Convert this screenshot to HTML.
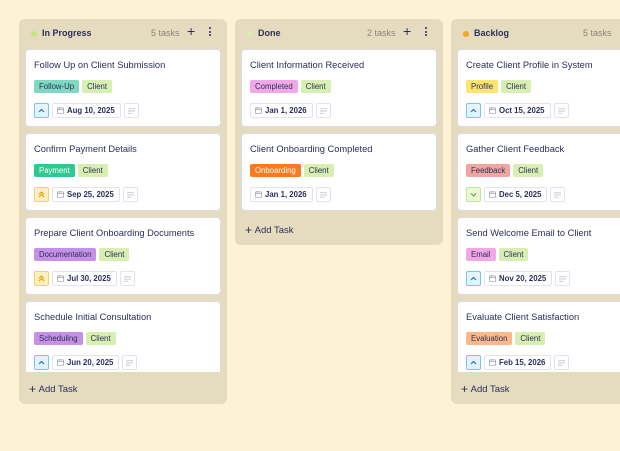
<!DOCTYPE html>
<html><head><meta charset="utf-8"><style>
*{box-sizing:border-box;margin:0;padding:0}
body{width:620px;height:451px;background:#fdf3d4;font-family:"Liberation Sans",sans-serif;position:relative;overflow:hidden;color:#2b2f5a}
.col{position:absolute;top:19px;width:208px;background:#e5dcc0;border-radius:6px;overflow:hidden}
.hd{position:absolute;top:0;left:0;right:0;height:29px}
.dot{position:absolute;left:12px;top:12px;width:6px;height:6px;border-radius:50%}
.hd .t{position:absolute;left:23px;top:9px;font-size:9px;font-weight:bold;color:#2b2f5a}
.hd .c{position:absolute;left:132px;top:9px;font-size:9px;color:#8a8678}
.hd .p{position:absolute;left:168px;top:4px;font-size:14px;color:#2b2f5a}
.hd .m{position:absolute;left:190px;top:8px;width:2px}
.hd .m i{display:block;width:2px;height:2px;background:#2b2f5a;border-radius:1px;margin-bottom:1.5px}
.card{position:absolute;left:6px;width:196px;height:78px;background:#fff;border-radius:4px;border:1px solid #ddd9e4}
.card .ti{position:absolute;left:8px;top:10px;font-size:9.3px;color:#2b2f5a;white-space:nowrap}
.tags{position:absolute;left:8px;top:30px;display:flex;gap:3px}
.tag{height:13px;line-height:13px;padding:0 5px;border-radius:2px;font-size:7.8px;color:#2b2f5a}
.ft{position:absolute;left:8px;top:53px;display:flex;gap:3px}
.pr{width:15px;height:15px;border-radius:2px;border:1px solid;display:flex;align-items:center;justify-content:center}
.dt{height:15px;border:1px solid #e4e2ee;border-radius:2px;font-size:7.8px;font-weight:bold;padding:0 5px 0 4px;display:flex;align-items:center;gap:3px;color:#2b2f5a}
.nt{width:15px;height:15px;border:1px solid #e4e2ee;border-radius:2px;display:flex;align-items:center;justify-content:center}
.add{position:absolute;left:10px;font-size:9.5px;color:#2b2f5a}
.client{background:#d7efb0}
</style></head><body>

<svg width="0" height="0" style="position:absolute">
<defs>
<symbol id="cal" viewBox="0 0 8 8"><rect x="0.5" y="1" width="7" height="6.5" rx="1" fill="none" stroke="#9b9aae" stroke-width="0.8"/><line x1="0.5" y1="3" x2="7.5" y2="3" stroke="#9b9aae" stroke-width="0.8"/><line x1="2.5" y1="0" x2="2.5" y2="2" stroke="#9b9aae" stroke-width="0.8"/></symbol>
<symbol id="lines" viewBox="0 0 8 6"><line x1="0" y1="0.5" x2="8" y2="0.5" stroke="#b4b3c4" stroke-width="0.8"/><line x1="0" y1="3" x2="8" y2="3" stroke="#b4b3c4" stroke-width="0.8"/><line x1="0" y1="5.5" x2="5" y2="5.5" stroke="#b4b3c4" stroke-width="0.8"/></symbol>
</defs></svg>

<!-- Column 1 -->
<div class="col" style="left:19px;height:385px">
<div class="hd"><span class="dot" style="background:#c3e67f"></span><span class="t">In Progress</span><span class="c">5 tasks</span><span class="p">+</span><span class="m"><i></i><i></i><i></i></span></div>

<div class="card" style="top:30px"><div class="ti">Follow Up on Client Submission</div>
<div class="tags"><span class="tag" style="background:#7fd8c0">Follow-Up</span><span class="tag client">Client</span></div>
<div class="ft"><span class="pr" style="background:#e4f4ff;border-color:#7cc4f0"><svg width="7" height="5" viewBox="0 0 7 5"><path d="M1 4L3.5 1.5L6 4" fill="none" stroke="#2575b8" stroke-width="1.2"/></svg></span><span class="dt"><svg width="7" height="7"><use href="#cal"/></svg>Aug 10, 2025</span><span class="nt"><svg width="7" height="6"><use href="#lines"/></svg></span></div></div>

<div class="card" style="top:114px"><div class="ti">Confirm Payment Details</div>
<div class="tags"><span class="tag" style="background:#2fc98f;color:#fff">Payment</span><span class="tag client">Client</span></div>
<div class="ft"><span class="pr" style="background:#fff0bf;border-color:#f5d16b"><svg width="7" height="7" viewBox="0 0 7 7"><path d="M1 3.5L3.5 1L6 3.5M1 6L3.5 3.5L6 6" fill="none" stroke="#e79a12" stroke-width="1.1"/></svg></span><span class="dt"><svg width="7" height="7"><use href="#cal"/></svg>Sep 25, 2025</span><span class="nt"><svg width="7" height="6"><use href="#lines"/></svg></span></div></div>

<div class="card" style="top:198px"><div class="ti">Prepare Client Onboarding Documents</div>
<div class="tags"><span class="tag" style="background:#c690e6">Documentation</span><span class="tag client">Client</span></div>
<div class="ft"><span class="pr" style="background:#fff0bf;border-color:#f5d16b"><svg width="7" height="7" viewBox="0 0 7 7"><path d="M1 3.5L3.5 1L6 3.5M1 6L3.5 3.5L6 6" fill="none" stroke="#e79a12" stroke-width="1.1"/></svg></span><span class="dt"><svg width="7" height="7"><use href="#cal"/></svg>Jul 30, 2025</span><span class="nt"><svg width="7" height="6"><use href="#lines"/></svg></span></div></div>

<div class="card" style="top:282px;height:71px;border-bottom:none;border-radius:4px 4px 0 0"><div class="ti">Schedule Initial Consultation</div>
<div class="tags"><span class="tag" style="background:#c690e6">Scheduling</span><span class="tag client">Client</span></div>
<div class="ft"><span class="pr" style="background:#e4f4ff;border-color:#7cc4f0"><svg width="7" height="5" viewBox="0 0 7 5"><path d="M1 4L3.5 1.5L6 4" fill="none" stroke="#2575b8" stroke-width="1.2"/></svg></span><span class="dt"><svg width="7" height="7"><use href="#cal"/></svg>Jun 20, 2025</span><span class="nt"><svg width="7" height="6"><use href="#lines"/></svg></span></div></div>
<div class="add" style="top:362px"><span style="font-size:12px;position:relative;top:1px">+</span>&nbsp;Add Task</div>
</div>

<!-- Column 2 -->
<div class="col" style="left:235px;height:226px">
<div class="hd"><span class="dot" style="background:#d8ecb0"></span><span class="t">Done</span><span class="c">2 tasks</span><span class="p">+</span><span class="m"><i></i><i></i><i></i></span></div>
<div class="card" style="top:30px"><div class="ti">Client Information Received</div>
<div class="tags"><span class="tag" style="background:#f2a8e6">Completed</span><span class="tag client">Client</span></div>
<div class="ft"><span class="dt"><svg width="7" height="7"><use href="#cal"/></svg>Jan 1, 2026</span><span class="nt"><svg width="7" height="6"><use href="#lines"/></svg></span></div></div>
<div class="card" style="top:114px"><div class="ti">Client Onboarding Completed</div>
<div class="tags"><span class="tag" style="background:#fb7a1e;color:#fff">Onboarding</span><span class="tag client">Client</span></div>
<div class="ft"><span class="dt"><svg width="7" height="7"><use href="#cal"/></svg>Jan 1, 2026</span><span class="nt"><svg width="7" height="6"><use href="#lines"/></svg></span></div></div>
<div class="add" style="top:203px"><span style="font-size:12px;position:relative;top:1px">+</span>&nbsp;Add Task</div>
</div>

<!-- Column 3 -->
<div class="col" style="left:451px;height:385px">
<div class="hd"><span class="dot" style="background:#f5a623"></span><span class="t">Backlog</span><span class="c">5 tasks</span></div>
<div class="card" style="top:30px"><div class="ti">Create Client Profile in System</div>
<div class="tags"><span class="tag" style="background:#fde46e">Profile</span><span class="tag client">Client</span></div>
<div class="ft"><span class="pr" style="background:#e4f4ff;border-color:#7cc4f0"><svg width="7" height="5" viewBox="0 0 7 5"><path d="M1 4L3.5 1.5L6 4" fill="none" stroke="#2575b8" stroke-width="1.2"/></svg></span><span class="dt"><svg width="7" height="7"><use href="#cal"/></svg>Oct 15, 2025</span><span class="nt"><svg width="7" height="6"><use href="#lines"/></svg></span></div></div>
<div class="card" style="top:114px"><div class="ti">Gather Client Feedback</div>
<div class="tags"><span class="tag" style="background:#f0a5a0">Feedback</span><span class="tag client">Client</span></div>
<div class="ft"><span class="pr" style="background:#eaf7d4;border-color:#c4e69a"><svg width="7" height="5" viewBox="0 0 7 5"><path d="M1 1.5L3.5 4L6 1.5" fill="none" stroke="#6a9a3a" stroke-width="1.1"/></svg></span><span class="dt"><svg width="7" height="7"><use href="#cal"/></svg>Dec 5, 2025</span><span class="nt"><svg width="7" height="6"><use href="#lines"/></svg></span></div></div>
<div class="card" style="top:198px"><div class="ti">Send Welcome Email to Client</div>
<div class="tags"><span class="tag" style="background:#f2a8e6">Email</span><span class="tag client">Client</span></div>
<div class="ft"><span class="pr" style="background:#e4f4ff;border-color:#7cc4f0"><svg width="7" height="5" viewBox="0 0 7 5"><path d="M1 4L3.5 1.5L6 4" fill="none" stroke="#2575b8" stroke-width="1.2"/></svg></span><span class="dt"><svg width="7" height="7"><use href="#cal"/></svg>Nov 20, 2025</span><span class="nt"><svg width="7" height="6"><use href="#lines"/></svg></span></div></div>
<div class="card" style="top:282px;height:71px;border-bottom:none;border-radius:4px 4px 0 0"><div class="ti">Evaluate Client Satisfaction</div>
<div class="tags"><span class="tag" style="background:#fbb98a">Evaluation</span><span class="tag client">Client</span></div>
<div class="ft"><span class="pr" style="background:#e4f4ff;border-color:#7cc4f0"><svg width="7" height="5" viewBox="0 0 7 5"><path d="M1 4L3.5 1.5L6 4" fill="none" stroke="#2575b8" stroke-width="1.2"/></svg></span><span class="dt"><svg width="7" height="7"><use href="#cal"/></svg>Feb 15, 2026</span><span class="nt"><svg width="7" height="6"><use href="#lines"/></svg></span></div></div>
<div class="add" style="top:362px"><span style="font-size:12px;position:relative;top:1px">+</span>&nbsp;Add Task</div>
</div>

</body></html>
